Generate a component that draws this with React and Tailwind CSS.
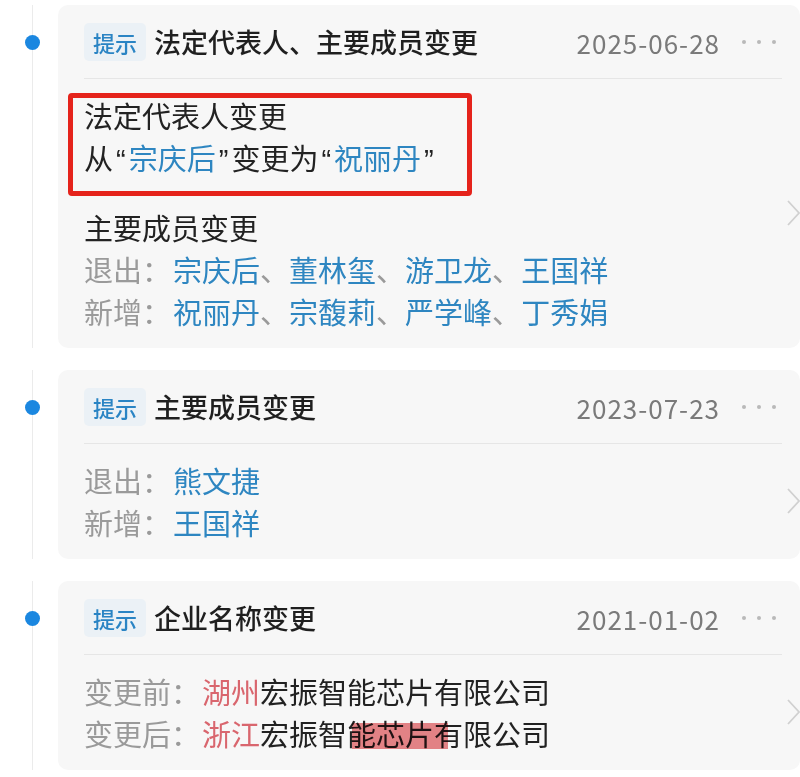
import React from "react";

const Chevron = () => (
    <svg width="14" height="26" viewBox="0 0 14 26" className="shrink-0 -mr-[18px]">
        <path d="M2 1 L13 13 L2 25" fill="none" stroke="#d0d0d0" strokeWidth="1.8" />
    </svg>
);

const Dots = () => (
    <div className="flex items-center gap-[11px] ml-[22px] mr-[6px]">
        <span className="w-[4px] h-[4px] rounded-full bg-[#b9b9b9]" />
        <span className="w-[4px] h-[4px] rounded-full bg-[#b9b9b9]" />
        <span className="w-[4px] h-[4px] rounded-full bg-[#b9b9b9]" />
    </div>
);

const Names = ({ names }) => (
    <span className="text-[#2e86c1]">
        {names.map((n, i) => (
            <React.Fragment key={n}>
                {n}
                {i < names.length - 1 && <span className="text-[#9a9a9a]">、</span>}
            </React.Fragment>
        ))}
    </span>
);

const Row = ({ label, children }) => (
    <div className="flex">
        <span className="text-[#9a9a9a]">{label}：</span>
        <span className="ml-[2px]">{children}</span>
    </div>
);

// narrow latin quote marks, as in the reference
const Q = ({ children }) => <span className="px-[3px] font-['Liberation_Sans',sans-serif]">{children}</span>;

const Item = ({ title, date, children, extra }) => (
    <div className="flex pb-[22px]">
        {/* timeline gutter */}
        <div className="w-[58px] shrink-0">
            <div className="ml-[25px] w-[15px] h-full flex flex-col items-center">
                <div className="w-px h-[30px] bg-[#ebebeb]" />
                <div className="w-[15px] h-[15px] rounded-full bg-[#1b87e0]" />
                <div className="w-px flex-1 bg-[#ebebeb]" />
            </div>
        </div>

        <div className="relative flex-1 rounded-[10px] bg-[#f7f7f7] pl-[26px] pr-[18px] pt-[18px] pb-[16px]">
            <div className="flex items-center h-[38px]">
                <span className="h-[38px] px-[9px] rounded-[5px] bg-[#ebf1f6] text-[#2a84c4] text-[22px] leading-[38px] font-medium">
                    提示
                </span>
                <span className="ml-[8px] text-[27px] text-[#1f1f1f] font-medium">{title}</span>
                <span className="ml-auto text-[26px] tracking-[1px] text-[#7a7a7a]">{date}</span>
                <Dots />
            </div>
            <div className="mt-[17px] h-px bg-[#e6e6e6]" />
            <div className="flex items-center pt-[15px]">
                <div className="flex-1 text-[29px] leading-[42px] text-[#222]">{children}</div>
                <Chevron />
            </div>
            {extra}
        </div>
    </div>
);

export default function App() {
    return (
        <div className="w-[800px] h-[777px] overflow-hidden bg-white pt-[5px] font-['Noto_Sans_CJK_SC',sans-serif]">
            <Item title="法定代表人、主要成员变更" date="2025-06-28">
                <div className="relative">
                    <div className="absolute -left-[16px] -top-[1px] w-[404px] h-[103px] border-[5px] border-[#e5231b] rounded-[4px]" />
                    <div>法定代表人变更</div>
                    <div>
                        从<Q>“</Q><span className="text-[#2e86c1]">宗庆后</span><Q>”</Q>变更为<Q>“</Q>
                        <span className="text-[#2e86c1]">祝丽丹</span><Q>”</Q>
                    </div>
                </div>
                <div className="mt-[25px]">
                    <div>主要成员变更</div>
                    <Row label="退出">
                        <Names names={["宗庆后", "董林玺", "游卫龙", "王国祥"]} />
                    </Row>
                    <Row label="新增">
                        <Names names={["祝丽丹", "宗馥莉", "严学峰", "丁秀娟"]} />
                    </Row>
                </div>
            </Item>

            <Item title="主要成员变更" date="2023-07-23">
                <Row label="退出">
                    <Names names={["熊文捷"]} />
                </Row>
                <Row label="新增">
                    <Names names={["王国祥"]} />
                </Row>
            </Item>

            <Item
                title="企业名称变更"
                date="2021-01-02"
                extra={
                    <div className="absolute left-[294px] top-[142px] w-[96px] h-[26px] bg-[#e35d62]/75 mix-blend-multiply" />
                }
            >
                <Row label="变更前">
                    <span className="text-[#d9666e]">湖州</span>宏振智能芯片有限公司
                </Row>
                <Row label="变更后">
                    <span className="text-[#d9666e]">浙江</span>宏振智能芯片有限公司
                </Row>
            </Item>
        </div>
    );
}
